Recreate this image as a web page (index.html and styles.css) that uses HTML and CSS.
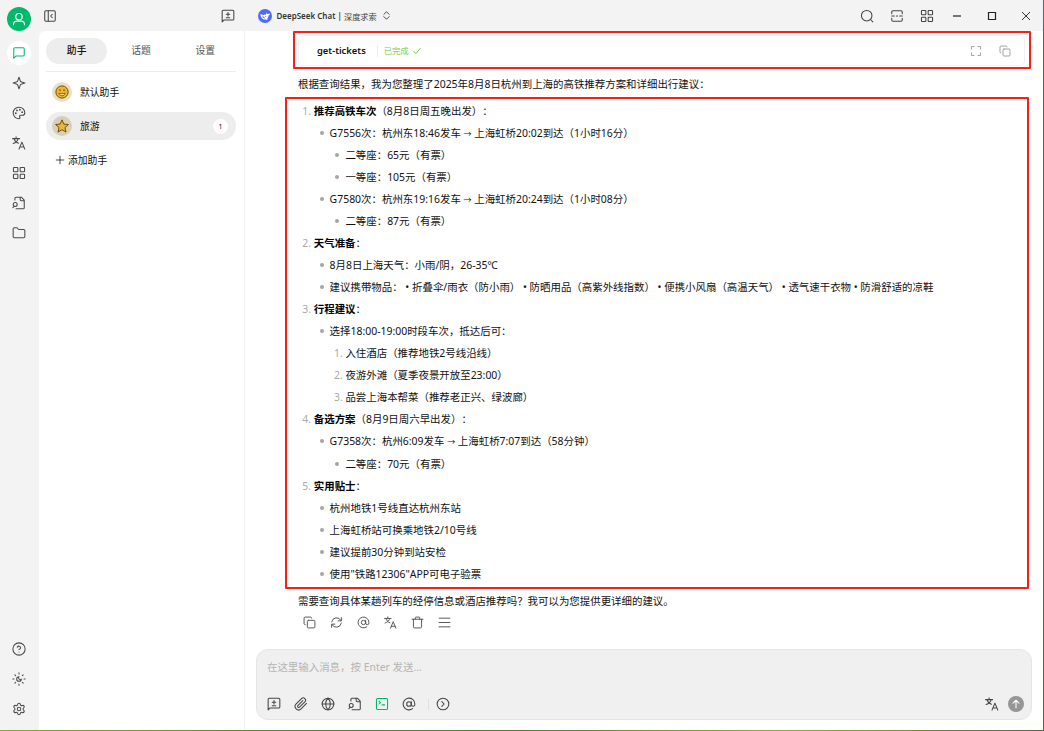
FILE: index.html
```
<!DOCTYPE html>
<html lang="zh-CN">
<head>
    <meta charset="UTF-8">
    <meta name="viewport" content="width=device-width, initial-scale=1.0">
    <title>DeepSeek Chat</title>
    <link rel="stylesheet" href="styles.css">
</head>
<body>

    <!-- icon set -->
    <svg class="sprite">
        <symbol id="message" viewBox="0 0 24 24"><path d="M21 15a2 2 0 0 1-2 2H7l-4 4V5a2 2 0 0 1 2-2h14a2 2 0 0 1 2 2z"/></symbol>
        <symbol id="message-plus" viewBox="0 0 24 24"><path d="M2 22V4a2 2 0 0 1 2-2h16a2 2 0 0 1 2 2v13a2 2 0 0 1-2 2H5l-3 3M12 6v6M9 9h6M9 15h6"/></symbol>
        <symbol id="sparkle" viewBox="0 0 24 24"><path d="M12 2l2.200 6.500a2 2 0 0 0 1.300 1.300L22 12l-6.500 2.200a2 2 0 0 0-1.300 1.300L12 22l-2.200-6.500a2 2 0 0 0-1.300-1.300L2 12l6.500-2.200a2 2 0 0 0 1.300-1.300z"/></symbol>
        <symbol id="palette" viewBox="0 0 24 24"><path d="M12 22a10 10 0 1 1 10-10.500c0 3-2 4.500-4.500 4.500H15a2.200 2.200 0 0 0-1.700 3.500c.9 1.200.3 2.500-1.300 2.500z"/><circle cx="13.500" cy="6.500" r=".7"/><circle cx="17.500" cy="10.500" r=".7"/><circle cx="6.500" cy="12.500" r=".7"/><circle cx="8.500" cy="7.500" r=".7"/></symbol>
        <symbol id="translate" viewBox="0 0 24 24"><path d="M1 4.500h12M7 1.500v3M2 13c4.500-1.500 7.500-4 8.500-8.500M3.500 4.500c1 4 4 7 7.500 8M12 22.500l5-12 5 12M13.500 19h7"/></symbol>
        <symbol id="grid" viewBox="0 0 24 24"><rect x="2.500" y="2.500" width="7.500" height="7.500" rx="1"/><rect x="14" y="2.500" width="7.500" height="7.500" rx="1"/><rect x="14" y="14" width="7.500" height="7.500" rx="1"/><rect x="2.500" y="14" width="7.500" height="7.500" rx="1"/></symbol>
        <symbol id="file-search" viewBox="0 0 24 24"><path d="M14 2v4a2 2 0 0 0 2 2h5M5 7V4a2 2 0 0 1 2-2h9l5 5v13a2 2 0 0 1-2 2H7M3.500 17.500L1.500 20"/><circle cx="5.500" cy="14.500" r="3.400"/></symbol>
        <symbol id="folder" viewBox="0 0 24 24"><path d="M20 20a2 2 0 0 0 2-2V8a2 2 0 0 0-2-2h-7.900a2 2 0 0 1-1.700-.9L9.600 3.900A2 2 0 0 0 7.900 3H4a2 2 0 0 0-2 2v13a2 2 0 0 0 2 2z"/></symbol>
        <symbol id="help" viewBox="0 0 24 24"><circle cx="12" cy="12" r="10.500"/><path d="M9.100 9a3 3 0 0 1 5.800 1c0 2-3 3-3 3M12 17h.01"/></symbol>
        <symbol id="sun-moon" viewBox="0 0 24 24"><path d="M12 8a2.800 2.800 0 0 0 4 4 4 4 0 1 1-4-4M12 1.500v2M12 20.500v2M4.900 4.900l1.400 1.400M17.700 17.700l1.400 1.400M1.500 12h2M20.500 12h2M6.300 17.700l-1.400 1.400M19.100 4.900l-1.400 1.400"/></symbol>
        <symbol id="settings" viewBox="0 0 24 24"><path d="M9.700 4.100a2.340 2.340 0 0 1 4.660 0 2.340 2.340 0 0 0 3.320 1.920 2.340 2.340 0 0 1 2.330 4.030 2.340 2.340 0 0 0 0 3.830 2.340 2.340 0 0 1-2.330 4.030 2.340 2.340 0 0 0-3.320 1.920 2.340 2.340 0 0 1-4.660 0 2.340 2.340 0 0 0-3.320-1.920 2.340 2.340 0 0 1-2.330-4.030 2.340 2.340 0 0 0 0-3.830 2.340 2.340 0 0 1 2.330-4.030A2.340 2.340 0 0 0 9.700 4.100"/><circle cx="12" cy="12" r="3"/></symbol>
        <symbol id="panel-left" viewBox="0 0 24 24"><rect x="3" y="3" width="18" height="18" rx="2"/><path d="M9 3v18M16 15l-3-3 3-3"/></symbol>
        <symbol id="user" viewBox="0 0 24 24"><circle cx="12" cy="8" r="5.500"/><path d="M2.500 22c0-4.500 2.500-6.500 6-6.500h7c3.500 0 6 2 6 6.500"/></symbol>
        <symbol id="chevrons" viewBox="0 0 24 24"><path d="M5 9l7-7 7 7M5 15l7 7 7-7"/></symbol>
        <symbol id="search" viewBox="0 0 24 24"><circle cx="11.500" cy="11.500" r="9"/><path d="M18 18l4 4"/></symbol>
        <symbol id="width" viewBox="0 0 24 24"><path d="M3 8V5a2 2 0 0 1 2-2h14a2 2 0 0 1 2 2v3M3 16v3a2 2 0 0 0 2 2h14a2 2 0 0 0 2-2v-3M3 12h4.500M11 12h2M16.500 12H21"/></symbol>
        <symbol id="minus" viewBox="0 0 24 24"><path d="M4 12h16"/></symbol>
        <symbol id="square" viewBox="0 0 24 24"><path d="M5 5h14v14H5z"/></symbol>
        <symbol id="close" viewBox="0 0 24 24"><path d="M4 4l16 16M20 4L4 20"/></symbol>
        <symbol id="plus" viewBox="0 0 24 24"><path d="M12 3v18M3 12h18"/></symbol>
        <symbol id="check" viewBox="0 0 24 24"><path d="M2 13l6.500 7L22 4"/></symbol>
        <symbol id="expand" viewBox="0 0 24 24"><path d="M3 8V3h5M16 3h5v5M21 16v5h-5M8 21H3v-5"/></symbol>
        <symbol id="copy" viewBox="0 0 24 24"><rect x="8" y="8" width="14" height="14" rx="2"/><path d="M4 16a2 2 0 0 1-2-2V4a2 2 0 0 1 2-2h10a2 2 0 0 1 2 2"/></symbol>
        <symbol id="refresh" viewBox="0 0 24 24"><path d="M21 3v6h-6M20.500 8.500A9.300 9.300 0 0 0 3 11M3 21v-6h6M3.500 15.500A9.300 9.300 0 0 0 21 13"/></symbol>
        <symbol id="at" viewBox="0 0 24 24"><circle cx="12" cy="12" r="4"/><path d="M16 8v5a3 3 0 0 0 6 0v-1a10 10 0 1 0-4 8"/></symbol>
        <symbol id="trash" viewBox="0 0 24 24"><path d="M2 6h20M4.500 6v14a2 2 0 0 0 2 2h11a2 2 0 0 0 2-2V6M8 6V3a1 1 0 0 1 1-1h6a1 1 0 0 1 1 1v3"/></symbol>
        <symbol id="menu" viewBox="0 0 24 24"><path d="M2 4h20M2 12h20M2 20h20"/></symbol>
        <symbol id="clip" viewBox="0 0 24 24"><path d="M21.400 11.100l-9.200 9.200a6 6 0 0 1-8.500-8.500l9.200-9.200a4 4 0 0 1 5.700 5.700l-9.200 9.200a2 2 0 0 1-2.800-2.800l8.500-8.500"/></symbol>
        <symbol id="globe" viewBox="0 0 24 24"><circle cx="12" cy="12" r="10"/><path d="M12 2a14.500 14.500 0 0 0 0 20 14.500 14.500 0 0 0 0-20M2 12h20"/></symbol>
        <symbol id="terminal" viewBox="0 0 24 24"><rect x="2.500" y="2.500" width="19" height="19" rx="2"/><path d="M7 7.500l2.500 2L7 12M12 13.500h4.500"/></symbol>
        <symbol id="circle-right" viewBox="0 0 24 24"><circle cx="12" cy="12" r="10"/><path d="M10 8l4 4-4 4"/></symbol>
        <symbol id="arrow-up" viewBox="0 0 24 24"><path d="M12 21V3M5 10l7-7 7 7"/></symbol>
    </svg>

    <div class="app">
        <nav class="sidebar">
            <div class="user"><svg class="icon"><use href="#user"/></svg></div>
            <a class="nav-item active"><svg class="icon"><use href="#message"/></svg></a>
            <a class="nav-item"><svg class="icon"><use href="#sparkle"/></svg></a>
            <a class="nav-item"><svg class="icon"><use href="#palette"/></svg></a>
            <a class="nav-item"><svg class="icon"><use href="#translate"/></svg></a>
            <a class="nav-item"><svg class="icon"><use href="#grid"/></svg></a>
            <a class="nav-item"><svg class="icon"><use href="#file-search"/></svg></a>
            <a class="nav-item"><svg class="icon"><use href="#folder"/></svg></a>
            <div class="spacer"></div>
            <a class="nav-item"><svg class="icon"><use href="#help"/></svg></a>
            <a class="nav-item"><svg class="icon"><use href="#sun-moon"/></svg></a>
            <a class="nav-item"><svg class="icon"><use href="#settings"/></svg></a>
        </nav>

        <div class="main">
            <header class="navbar">
                <div class="navbar-left">
                    <svg class="icon"><use href="#panel-left"/></svg>
                    <svg class="icon"><use href="#message-plus"/></svg>
                </div>
                <div class="model">
                    <svg class="logo" viewBox="0 0 28 28">
                        <circle cx="14" cy="14" r="14"/>
                        <path d="M4.500 11c2-.8 4 .3 5.500 1.500 2-1.800 4-1.600 5.500-.3.600-1.800 0-3 1.200-4.400.8 1.300 2 2 3.300 2.200 1.200-.1 2.400-.9 4-.8-.3 2-1.300 3.300-3 3.800-.1 3-1.200 5.200-3 6.700l2 1.500c-2 .5-3.500.3-4.700-.3-5.800 1-10-3.400-10.800-9.900z"/>
                        <path class="belly" d="M8.500 14.500c2-.3 4 1.200 5.800 4.300-2.800-.2-5-1.600-5.800-4.300z"/>
                        <circle cx="15.500" cy="15" r="1"/>
                    </svg>
                    <span class="model-name">DeepSeek Chat | </span><span class="provider">深度求索</span>
                    <svg class="icon chevrons"><use href="#chevrons"/></svg>
                </div>
                <div class="tools">
                    <svg class="icon"><use href="#search"/></svg>
                    <svg class="icon"><use href="#width"/></svg>
                    <svg class="icon"><use href="#grid"/></svg>
                </div>
                <div class="window-controls">
                    <svg class="icon"><use href="#minus"/></svg>
                    <svg class="icon"><use href="#square"/></svg>
                    <svg class="icon thin"><use href="#close"/></svg>
                </div>
            </header>

            <div class="content">
                <aside class="panel">
                    <div class="tabs">
                        <div class="tab selected">助手</div>
                        <div class="tab">话题</div>
                        <div class="tab">设置</div>
                    </div>
                    <div class="assistant">
                        <span class="emoji">
                            <svg viewBox="0 0 24 24"><circle class="gold" cx="12" cy="12" r="10.500"/><path d="M8.500 7v3.500M15.500 7v3.500"/><path class="smile" d="M6.500 14c3 1 8 1 11 0-.5 3-3 4.500-5.500 4.500s-5-1.500-5.500-4.500z"/></svg>
                        </span>
                        <span>默认助手</span>
                    </div>
                    <div class="assistant selected">
                        <span class="emoji">
                            <svg viewBox="0 0 24 24"><path class="gold" d="M12 1.500l3.200 7.200 7.800.8-5.900 5.200 1.700 7.700-6.800-4-6.800 4 1.700-7.700L1 9.500l7.800-.8z"/></svg>
                        </span>
                        <span>旅游</span>
                        <span class="count">1</span>
                    </div>
                    <div class="add"><svg class="icon"><use href="#plus"/></svg>添加助手</div>
                </aside>

                <section class="chat">
                    <div class="frame frame-tool">
                        <div class="tool-card">
                            <span class="tool-name">get-tickets</span>
                            <span class="tool-status">已完成<svg class="icon"><use href="#check"/></svg></span>
                            <span class="tool-actions">
                                <svg class="icon"><use href="#expand"/></svg>
                                <svg class="icon"><use href="#copy"/></svg>
                            </span>
                        </div>
                    </div>

                    <p class="intro">根据查询结果，我为您整理了2025年8月8日杭州到上海的高铁推荐方案和详细出行建议：</p>

                    <div class="frame frame-answer">
                        <ol>
                            <li><strong>推荐高铁车次</strong>（8月8日周五晚出发）：
                                <ul>
                                    <li>G7556次：杭州东18:46发车 <span class="arrow">→</span> 上海虹桥20:02到达（1小时16分）
                                        <ul>
                                            <li>二等座：65元（有票）</li>
                                            <li>一等座：105元（有票）</li>
                                        </ul>
                                    </li>
                                    <li>G7580次：杭州东19:16发车 <span class="arrow">→</span> 上海虹桥20:24到达（1小时08分）
                                        <ul>
                                            <li>二等座：87元（有票）</li>
                                        </ul>
                                    </li>
                                </ul>
                            </li>
                            <li><strong>天气准备</strong>：
                                <ul>
                                    <li>8月8日上海天气：小雨/阴，26-35℃</li>
                                    <li>建议携带物品： • 折叠伞/雨衣（防小雨） • 防晒用品（高紫外线指数） • 便携小风扇（高温天气） • 透气速干衣物 • 防滑舒适的凉鞋</li>
                                </ul>
                            </li>
                            <li><strong>行程建议</strong>：
                                <ul>
                                    <li>选择18:00-19:00时段车次，抵达后可：
                                        <ol>
                                            <li>入住酒店（推荐地铁2号线沿线）</li>
                                            <li>夜游外滩（夏季夜景开放至23:00）</li>
                                            <li>品尝上海本帮菜（推荐老正兴、绿波廊）</li>
                                        </ol>
                                    </li>
                                </ul>
                            </li>
                            <li><strong>备选方案</strong>（8月9日周六早出发）：
                                <ul>
                                    <li>G7358次：杭州6:09发车 <span class="arrow">→</span> 上海虹桥7:07到达（58分钟）
                                        <ul>
                                            <li>二等座：70元（有票）</li>
                                        </ul>
                                    </li>
                                </ul>
                            </li>
                            <li><strong>实用贴士</strong>：
                                <ul>
                                    <li>杭州地铁1号线直达杭州东站</li>
                                    <li>上海虹桥站可换乘地铁2/10号线</li>
                                    <li>建议提前30分钟到站安检</li>
                                    <li>使用"铁路12306"APP可电子验票</li>
                                </ul>
                            </li>
                        </ol>
                    </div>

                    <p class="outro">需要查询具体某趟列车的经停信息或酒店推荐吗？我可以为您提供更详细的建议。</p>

                    <div class="message-actions">
                        <svg class="icon"><use href="#copy"/></svg>
                        <svg class="icon"><use href="#refresh"/></svg>
                        <svg class="icon"><use href="#at"/></svg>
                        <svg class="icon"><use href="#translate"/></svg>
                        <svg class="icon"><use href="#trash"/></svg>
                        <svg class="icon"><use href="#menu"/></svg>
                    </div>

                    <div class="composer">
                        <div class="placeholder">在这里输入消息，按 Enter 发送...</div>
                        <div class="composer-bar">
                            <svg class="icon"><use href="#message-plus"/></svg>
                            <svg class="icon"><use href="#clip"/></svg>
                            <svg class="icon"><use href="#globe"/></svg>
                            <svg class="icon"><use href="#file-search"/></svg>
                            <svg class="icon on"><use href="#terminal"/></svg>
                            <svg class="icon"><use href="#at"/></svg>
                            <span class="divider"></span>
                            <svg class="icon"><use href="#circle-right"/></svg>
                            <div class="spacer"></div>
                            <svg class="icon"><use href="#translate"/></svg>
                            <span class="send"><svg class="icon"><use href="#arrow-up"/></svg></span>
                        </div>
                    </div>
                </section>
            </div>
        </div>
    </div>

</body>
</html>
```
FILE: styles.css
```
*, *:before, *:after {
  box-sizing: border-box;
}

body {
  margin: 0;
  width: 1044px;
  height: 731px;
  overflow: hidden;
  padding: 0 1px 1px 0;
  background: linear-gradient(90deg, #86a832, #5d8a35 25%, #4f8238 50%, #94ad35 75%, #58683f);
  font-family: "Noto Sans", "Noto Sans CJK SC", sans-serif;
  font-size: 10.45px;
  color: #111;
  text-spacing-trim: space-all;
}

p, ol, ul {
  margin: 0;
}

.sprite {
  display: none;
}

.icon {
  display: block;
  flex: none;
  width: 14px;
  height: 14px;
  fill: none;
  stroke: currentColor;
  stroke-width: 1.8;
  stroke-linecap: round;
  stroke-linejoin: round;
}

.spacer {
  flex: 1;
}

.app {
  display: flex;
  height: 730px;
  background: #f3f3f3;
}

/* left icon bar */
.sidebar {
  display: flex;
  flex-direction: column;
  align-items: center;
  gap: 6px;
  width: 39px;
  padding: 7px 1px 9px 0;
  color: #4a4a4a;
}

.user {
  display: flex;
  align-items: center;
  justify-content: center;
  width: 24px;
  height: 24px;
  margin-bottom: 4px;
  border-radius: 50%;
  background: #00b96b;
  color: #fff;
}

.user .icon {
  stroke-width: 2;
}

.nav-item {
  display: flex;
  align-items: center;
  justify-content: center;
  width: 24px;
  height: 24px;
  border-radius: 50%;
}

.nav-item.active {
  background: #fff;
  color: #00b96b;
}

.main {
  display: flex;
  flex-direction: column;
  flex: 1;
  min-width: 0;
}

/* title bar */
.navbar {
  display: flex;
  align-items: center;
  height: 31px;
  color: #444;
}

.navbar-left {
  display: flex;
  justify-content: space-between;
  width: 206px;
  padding: 0 10px 0 4px;
}

.model {
  display: flex;
  align-items: center;
  padding-left: 12.5px;
  white-space: pre;
}

.logo {
  width: 14px;
  height: 14px;
  margin-right: 5px;
  fill: #4d6bfe;
}

.logo path {
  fill: #fff;
}

.logo .belly {
  fill: #4d6bfe;
}

.model-name {
  font-size: 8px;
  font-weight: 600;
  color: #333;
}

.provider {
  font-size: 8.2px;
}

.chevrons {
  width: 9px;
  height: 9px;
  margin-left: 5px;
  stroke-width: 2.6;
}

.tools {
  display: flex;
  gap: 16px;
  margin-left: auto;
}

.window-controls {
  display: flex;
  gap: 22.5px;
  margin-left: 17px;
  padding-right: 11px;
  color: #222;
}

.window-controls .icon {
  width: 12px;
  height: 12px;
  stroke-width: 2.4;
  stroke-linecap: butt;
  stroke-linejoin: miter;
}

.window-controls .thin {
  stroke-width: 1.8;
}

.content {
  display: flex;
  flex: 1;
  min-height: 0;
  border-radius: 6px 0 0 0;
  background: #fff;
  overflow: hidden;
}

/* assistants */
.panel {
  width: 206px;
  padding: 7px 8px 0 7px;
  border-right: 1px solid #efefef;
  font-size: 9.8px;
}

.tabs {
  display: flex;
  height: 34px;
  padding-bottom: 7px;
  border-bottom: 1px solid #ececec;
  gap: 3px;
}

.tab {
  flex: 1;
  height: 26px;
  line-height: 26px;
  border-radius: 13px;
  text-align: center;
  color: #555;
}

.tab.selected {
  background: #ededed;
  color: #111;
  font-weight: 500;
}

.assistant {
  display: flex;
  align-items: center;
  height: 28px;
  margin-top: 6px;
  padding: 0 8px 0 6px;
  border-radius: 14px;
}

.assistant.selected {
  background: #ededed;
}

.emoji {
  display: flex;
  align-items: center;
  justify-content: center;
  width: 20px;
  height: 20px;
  margin-right: 8px;
  border-radius: 50%;
  background: #eadfc0;
}

.selected .emoji {
  background: #dacfb4;
}

.emoji svg {
  width: 14px;
  height: 14px;
  fill: none;
  stroke: #5c4716;
  stroke-width: 1.6;
}

.emoji .gold {
  fill: #f3b52c;
}

.emoji .smile {
  fill: #f9dc85;
  stroke-width: 1.2;
}

.count {
  width: 15px;
  height: 15px;
  margin-left: auto;
  border-radius: 50%;
  background: #fff;
  font-size: 7px;
  line-height: 15px;
  text-align: center;
}

.add {
  display: flex;
  align-items: center;
  height: 27px;
  margin-top: 6px;
  padding-left: 9px;
}

.add .icon {
  width: 10px;
  height: 10px;
  margin-right: 3px;
}

/* conversation */
.chat {
  display: flex;
  flex-direction: column;
  flex: 1;
  min-width: 0;
}

.frame {
  border: 2px solid #fb1e14;
  border-radius: 1px;
}

.frame-tool {
  height: 38px;
  margin: 0 12px 0 48px;
  padding: 2px 4px 0 3px;
}

.tool-card {
  display: flex;
  align-items: center;
  height: 31px;
  padding: 0 13px 0 18px;
  border: 1px solid #f0f0f0;
  border-radius: 5px;
}

.tool-name {
  padding-right: 11px;
  border-right: 1px solid #eee;
  font-size: 9.4px;
  font-weight: 600;
  line-height: 12px;
}

.tool-status {
  display: flex;
  align-items: center;
  margin-left: 6px;
  font-size: 8.3px;
  line-height: 12px;
  color: #6fd04a;
}

.tool-status .icon {
  width: 8px;
  height: 8px;
  margin-left: 4px;
  stroke-width: 3;
}

.tool-actions {
  display: flex;
  gap: 17px;
  margin-left: auto;
  color: #999;
}

.tool-actions .icon {
  width: 12px;
  height: 12px;
}

.intro {
  padding: 4px 0 2px 53px;
  line-height: 22px;
}

.frame-answer {
  height: 492px;
  margin: 0 14px 0 40px;
  padding: 1px 0 0 11px;
  line-height: 22.03px;
}

ol, ul {
  padding-left: 15.8px;
}

li::marker {
  color: #aaa;
}

/* small grey dots instead of the browser's nested bullets */
ul {
  list-style: none;
}

ul > li::before {
  content: "";
  display: inline-block;
  width: 4px;
  height: 4px;
  margin: 0 6px 0 -10px;
  border-radius: 50%;
  background: #a5a5a5;
  vertical-align: 2px;
}

.arrow {
  display: inline-block;
  width: 8px;
  font-size: 8px;
  line-height: 12px;
}

strong {
  font-weight: 700;
  color: #000;
}

.outro {
  padding: 1px 0 0 53px;
  line-height: 22px;
}

.message-actions {
  display: flex;
  gap: 14px;
  padding: 4px 0 0 58px;
  color: #555;
}

.message-actions .icon {
  width: 13px;
  height: 13px;
}

.composer {
  display: flex;
  flex-direction: column;
  justify-content: space-between;
  height: 71px;
  margin: auto 11px 10px;
  padding: 7px 7px 7px 10px;
  border: 1px solid #e5e5e5;
  border-radius: 12px;
  background: #f0f0f0;
}

.placeholder {
  line-height: 20px;
  color: #b4b4b4;
}

.composer-bar {
  display: flex;
  align-items: center;
  gap: 13px;
  color: #444;
}

.composer-bar .on {
  color: #00b96b;
}

.divider {
  width: 1px;
  height: 11px;
  margin: 0 -6px 0 -1px;
  background: #e0e0e0;
}

.send {
  display: flex;
  align-items: center;
  justify-content: center;
  width: 16px;
  height: 16px;
  margin-left: -4px;
  border-radius: 50%;
  background: #969696;
  color: #fff;
}

.send .icon {
  width: 10px;
  height: 10px;
  stroke-width: 2.6;
}
```
